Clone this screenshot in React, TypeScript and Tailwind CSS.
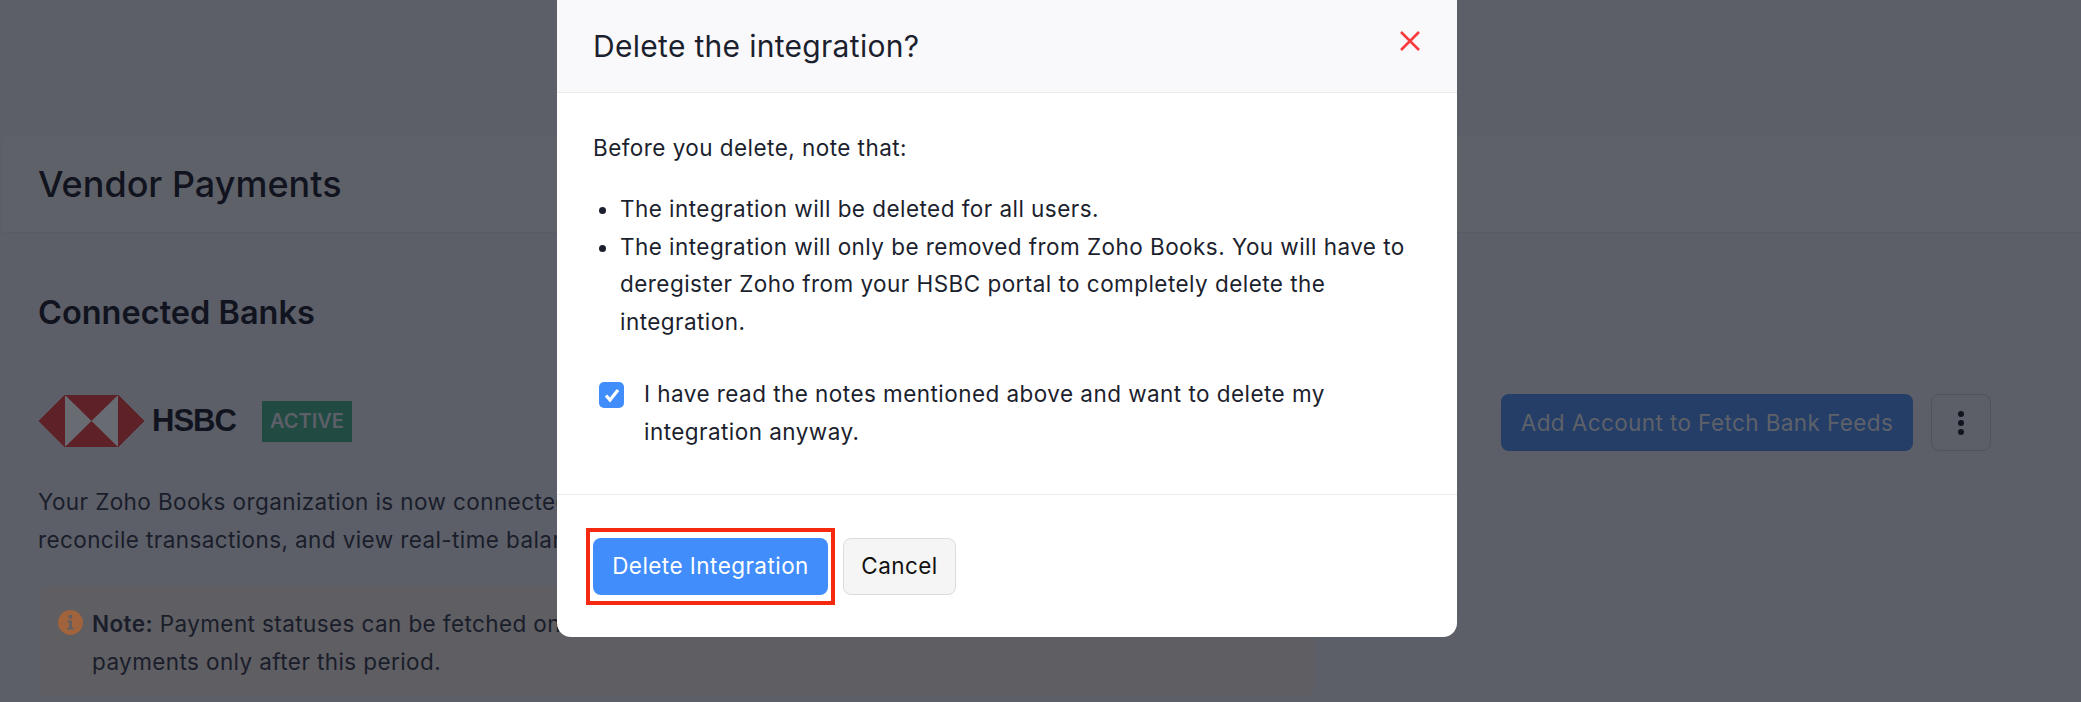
import React from "react";

const HsbcLogo = () => (
  <svg width="105" height="52" viewBox="0 0 105 52" className="shrink-0">
    <polygon points="26,0 79,0 79,52 26,52" fill="#686b72" />
    <polygon points="0,26 26,0 26,52" fill="#5d2127" />
    <polygon points="105,26 79,0 79,52" fill="#5d2127" />
    <polygon points="26,0 79,0 52.5,26" fill="#5d2127" />
    <polygon points="26,52 79,52 52.5,26" fill="#5d2127" />
    <polygon points="26,0 79,0 105,26 79,52 26,52 0,26" fill="none" stroke="#5d2127" strokeWidth="1" />
  </svg>
);

const Background = () => (
  <div className="pl-[3px] pt-[135px] text-[#1a1d2a] text-[22.5px] tracking-[0.4px]">
    <div className="h-[98px] flex items-center pl-[35px] bg-[#5f6169] border-b border-[#585b64] rounded-tl-lg">
      <h1 className="text-[36px] font-medium tracking-normal text-[#11141e] whitespace-nowrap">Vendor Payments</h1>
    </div>
    <div className="pl-[36px]">
      <h2 className="-ml-[1px] mt-[60px] text-[32.5px] leading-[40px] tracking-normal font-semibold text-[#11141e]">Connected Banks</h2>
      <div className="mt-[62px] flex items-center h-[52px]">
        <HsbcLogo />
        <span className="ml-[8px] w-[83px] text-[31px] font-bold font-['Liberation_Sans',sans-serif] tracking-[-1px] text-[#11141e]">HSBC</span>
        <span className="ml-[27px] w-[90px] h-[41px] flex items-center justify-center bg-[#214b42] text-[20px] tracking-normal font-semibold text-[#5c5f68]">ACTIVE</span>
        <div className="ml-auto flex items-center gap-[18px] pr-[90px] mt-[3px]">
          <button className="w-[412px] h-[57px] rounded-lg bg-[#243e68] text-[#5f6168]">Add Account to Fetch Bank Feeds</button>
          <button className="w-[60px] h-[57px] rounded-lg border border-[#50535c] flex flex-col items-center justify-center gap-[3px]">
            <span className="w-[6px] h-[6px] rounded-full bg-[#12141e]" />
            <span className="w-[6px] h-[6px] rounded-full bg-[#12141e]" />
            <span className="w-[6px] h-[6px] rounded-full bg-[#12141e]" />
          </button>
        </div>
      </div>
      <p className="-ml-[1px] mt-[36px] leading-[38px] whitespace-nowrap">
        Your Zoho Books organization is now connected to your HSBC account. You can initiate payments,
        <br />
        reconcile transactions, and view real-time balances from here.
      </p>
      <div className="mt-[27px] w-[1275px] h-[111px] rounded-lg bg-[#5e5e63] pl-[19px] pt-[19px] flex gap-[9px] leading-[38px]">
        <svg width="25" height="25" viewBox="0 0 25 25" className="shrink-0 mt-[5px]">
          <circle cx="12.5" cy="12.5" r="12.5" fill="#a0633c" />
          <circle cx="12.5" cy="6.8" r="2" fill="#5e5e63" />
          <path d="M9.5 10.5h4.4v7.2h1.8v1.9H9.3v-1.9h1.8v-5.3H9.5z" fill="#5e5e63" />
        </svg>
        <p className="whitespace-nowrap">
          <b className="font-semibold">Note:</b> Payment statuses can be fetched only after 24 hours. You can view the
          <br />
          payments only after this period.
        </p>
      </div>
    </div>
  </div>
);

const DeleteModal = () => (
  <div className="absolute left-[557px] top-0 w-[900px] h-[637px] bg-white rounded-b-[14px] flex flex-col text-[#1c1f2e] text-[22.5px] tracking-[0.45px]">
    <div className="h-[93px] bg-[#f9f9fb] border-b border-[#ebebeb] flex items-center justify-between pl-[36px] pr-[36px] shrink-0">
      <h3 className="text-[30px] tracking-[0.3px] mt-[1px] text-[#1c1f2e]">Delete the integration?</h3>
      <svg width="22" height="22" viewBox="0 0 22 22" className="-mt-[10px] mr-[0px]">
        <path d="M2 2l18 18M20 2L2 20" stroke="#fb3b3b" strokeWidth="2.6" fill="none" />
      </svg>
    </div>
    <div className="pl-[36px] pr-[36px] flex-1 border-b border-[#ebebeb]">
      <p className="mt-[36px] leading-[38px]">Before you delete, note that:</p>
      <ul className="mt-[23px] list-disc pl-[27px] leading-[37.5px]">
        <li>The integration will be deleted for all users.</li>
        <li>
          The integration will only be removed from Zoho Books. You will have to deregister Zoho from your HSBC portal to completely delete the integration.
        </li>
      </ul>
      <div className="mt-[41px] flex pl-[6px]">
        <span className="mt-[1px] w-[25px] h-[26px] rounded-[5px] bg-[#408dfb] flex items-center justify-center shrink-0">
          <svg width="20" height="20" viewBox="0 0 20 20">
            <path d="M4 10.5l4 4.5 8-10" stroke="#fff" strokeWidth="3.2" fill="none" />
          </svg>
        </span>
        <label className="ml-[20px] leading-[38px] -mt-[6px]">
          I have read the notes mentioned above and want to delete my integration anyway.
        </label>
      </div>
    </div>
    <div className="h-[142px] pl-[36px] flex items-center gap-[15px] shrink-0">
      <div className="relative">
        <button className="w-[235px] h-[57px] rounded-lg bg-[#408dfb] text-white">Delete Integration</button>
        <div className="absolute -left-[7px] -top-[10px] -right-[7px] -bottom-[10px] border-[4px] border-[#f5290f] pointer-events-none" />
      </div>
      <button className="w-[113px] h-[57px] rounded-lg bg-[#f5f5f5] border border-[#dcdcdc] text-[#111]">Cancel</button>
    </div>
  </div>
);

export default function App() {
  return (
    <div className="relative h-[702px] overflow-hidden bg-[#5c5f68] font-['Inter',sans-serif]">
      <Background />
      <DeleteModal />
    </div>
  );
}
